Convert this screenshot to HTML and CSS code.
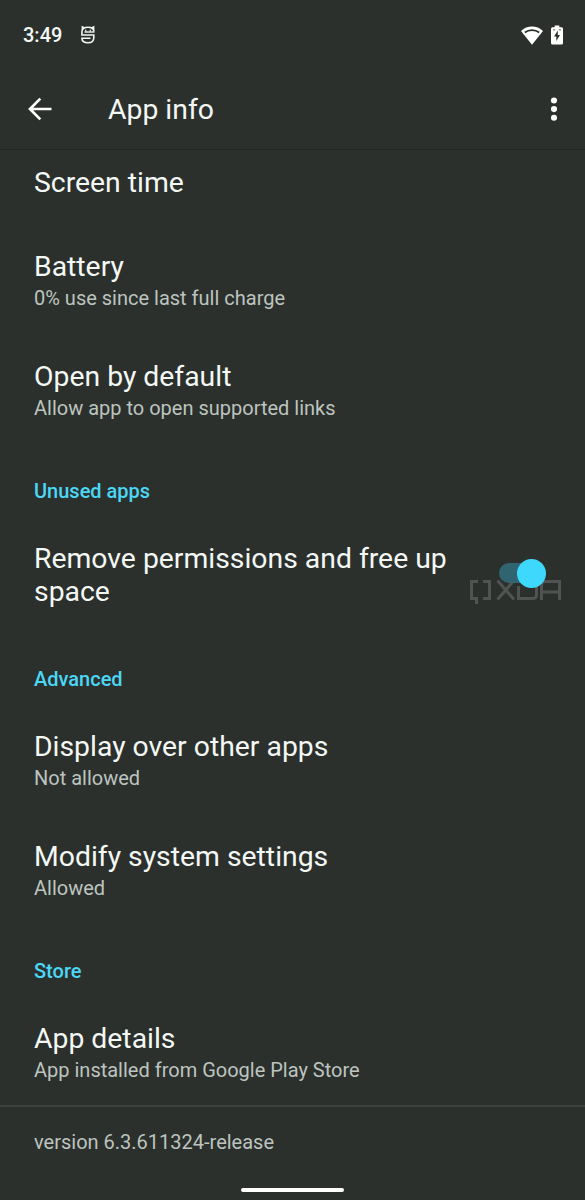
FILE: index.html
```html
<!DOCTYPE html>
<html lang="en">
<head>
<meta charset="utf-8">
<title>App info</title>
<link rel="stylesheet" href="styles.css">
</head>
<body>
<div class="screen">
  <header class="status-bar">
    <span class="clock">3:49</span>
    <svg class="notification-icon" width="16" height="20" viewBox="0 0 16 20" fill="none" stroke="#f4f7f5">
      <path d="M14 6.500C13.500 3.500 11 2.300 8 2.300S2.300 3.500 1.900 6.500V10H13.800V12.500C13.800 16 11.500 17.800 8 17.800S2 16 1.900 13.200H10.500" stroke-width="1.600"/>
      <path d="M1.600 5V.8L5 2.300ZM14.400 5V.8L11 2.300Z" fill="#f4f7f5" stroke="none"/>
      <path d="M4.500 7H14.500" stroke-width="1.400"/>
      <path d="M5.700 4.800V6.500M10.300 4.800V6.500" stroke-width="1.200"/>
    </svg>
    <div class="status-icons">
      <svg width="22" height="19" viewBox="0 0 22 19">
        <path d="M0 5C6.200-.9 15.800-.9 22 5L11 18.800Z" fill="#fff"/>
        <path d="M3.800 6.500C8 3.200 14 3.200 18.200 6.500" fill="none" stroke="#2b302d" stroke-width="1.700"/>
      </svg>
      <svg width="12" height="20" viewBox="0 0 12 20">
        <path d="M3.700.5H8.300V2.300H10.500Q12 2.300 12 3.800V18Q12 19.500 10.500 19.500H1.500Q0 19.500 0 18V3.800Q0 2.300 1.500 2.300H3.700Z" fill="#fff"/>
        <path d="M6.800 5.500 3 11.500H5.300V16L9 10H6.800ZM2 4.500H4.200V5.300H2ZM7.800 4.500H10V5.300H7.800Z" fill="#2b302d"/>
      </svg>
    </div>
  </header>
  <div class="app-bar">
    <svg width="24" height="24" viewBox="0 0 24 24" fill="none" stroke="#fff" stroke-width="2.700">
      <path d="M23.500 12H2.500M12.300 1.600 2 12 12.300 22.400"/>
    </svg>
    <h1 class="app-bar-title">App info</h1>
    <svg class="overflow-icon" width="8" height="24" viewBox="0 0 8 24" fill="#fff">
      <circle cx="4" cy="3.500" r="3.050"/><circle cx="4" cy="12.100" r="3.050"/><circle cx="4" cy="20.700" r="3.050"/>
    </svg>
  </div>
  <main class="list">
    <div class="item item-first"><div class="title">Screen time</div></div>
    <div class="item"><div class="title">Battery</div><div class="summary">0% use since last full charge</div></div>
    <div class="item"><div class="title">Open by default</div><div class="summary">Allow app to open supported links</div></div>
    <h2 class="category">Unused apps</h2>
    <div class="item item-switch">
      <div class="title">Remove permissions and free up space</div>
      <svg class="watermark" width="94" height="30" viewBox="0 0 94 30" fill="none" stroke="#a0a0a0" stroke-opacity=".32" stroke-width="3">
        <path d="M10 3.500H3.500V20.500H8.500V26M15 3.500H21.500V20.500H15"/>
        <path d="M29.500 2.500 46 21.500M46 2.500 29.500 21.500"/>
        <path d="M49 3.500H64.500Q68.500 3.500 68.500 7.500V16.500Q68.500 20.500 64.500 20.500H50.500V8"/>
        <path d="M73.500 22V7.500Q73.500 3.500 77.500 3.500H91.500V22M73.500 14H91.500"/>
      </svg>
      <div class="switch"><span class="thumb"></span></div>
    </div>
    <h2 class="category">Advanced</h2>
    <div class="item"><div class="title">Display over other apps</div><div class="summary">Not allowed</div></div>
    <div class="item"><div class="title">Modify system settings</div><div class="summary">Allowed</div></div>
    <h2 class="category">Store</h2>
    <div class="item"><div class="title">App details</div><div class="summary">App installed from Google Play Store</div></div>
    <footer class="version">version 6.3.611324-release</footer>
  </main>
  <div class="nav-handle"></div>
</div>
</body>
</html>
```
FILE: styles.css
```css
* { box-sizing: border-box; }
body {
  margin: 0;
  background: #2b302d;
  color: #f4f8f5;
  font-family: Roboto, sans-serif;
}
svg { display: block; }
.screen {
  position: relative;
  display: flex;
  flex-direction: column;
  width: 585px;
  height: 1200px;
  overflow: hidden;
}
.status-bar {
  display: flex;
  align-items: center;
  height: 70px;
  padding: 0 22px 0 23px;
}
.clock { font-size: 20px; font-weight: 500; line-height: 24px; width: 57px; }
.status-icons { display: flex; align-items: center; gap: 8px; margin-left: auto; }
.app-bar {
  display: flex;
  align-items: center;
  height: 80px;
  padding: 0 27px 2px 28px;
  border-bottom: 1px solid #232825;
}
.app-bar-title {
  margin: 1px 0 0 56px;
  font-size: 28.35px;
  font-weight: 400;
  line-height: 33px;
}
.overflow-icon { margin-left: auto; }
.item { padding: 25px 34px 25px; }
.item-first { padding: 16px 34px 26px; }
.title { font-size: 28.35px; line-height: 33px; }
.summary { margin-top: 3px; font-size: 20px; line-height: 24px; color: #bdc4bf; }
.category {
  margin: 0;
  padding: 34px 34px 14px;
  font-size: 20px;
  font-weight: 500;
  line-height: 24px;
  color: #4cd7f6;
}
.item-switch {
  position: relative;
  display: flex;
  align-items: center;
  justify-content: space-between;
  padding: 25px 39px 25px 34px;
}
.item-switch .title { width: 420px; }
.switch {
  position: relative;
  display: flex;
  align-items: center;
  justify-content: flex-end;
  width: 47px;
  height: 20px;
  margin-bottom: 4px;
  border-radius: 10px;
  background: linear-gradient(90deg, #316471 36px, transparent 36px);
}
.thumb { width: 29px; height: 29px; flex: none; border-radius: 50%; background: #3ed8fd; }
.watermark { position: absolute; left: 468px; top: 61px; }
.version {
  height: 94px;
  margin-top: -2px;
  padding: 23px 34px;
  border-top: 2px solid #3c413e;
  font-size: 20px;
  line-height: 24px;
  color: #bdc4bf;
}
.nav-handle {
  position: absolute;
  left: 241px;
  top: 1188px;
  width: 103px;
  height: 4px;
  border-radius: 2px;
  background: #fff;
}
```
